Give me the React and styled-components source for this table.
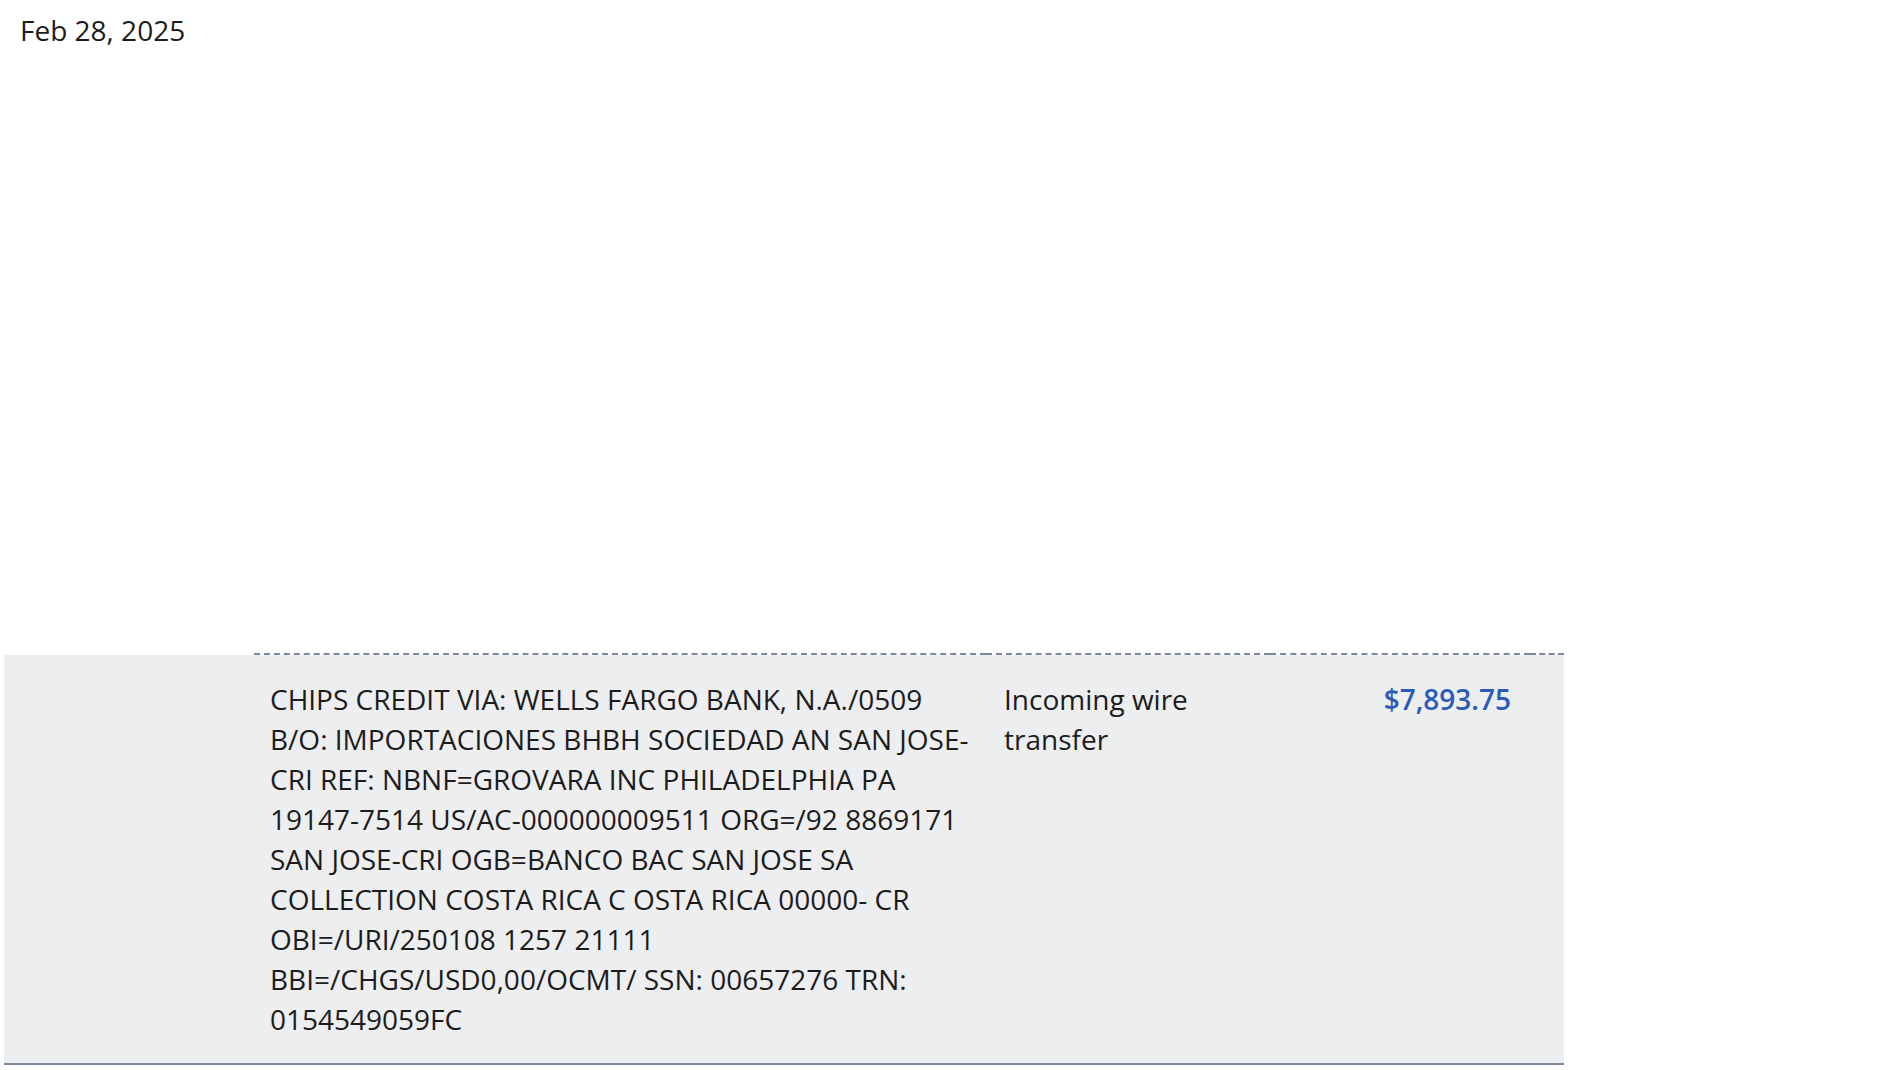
import React from 'react'
import styled, { createGlobalStyle } from 'styled-components'

const GlobalStyle = createGlobalStyle`
  body {
    margin: 0;
    background: #fff;
    font-family: "Open Sans", "Liberation Sans", sans-serif;
    color: #1c1c1c;
  }
`

const Page = styled.div`
  padding: 10px 0 0 4px;
  width: 1560px;
`

const DateLabel = styled.div`
  padding-left: 16px;
  font-size: 28px;
  line-height: 40px;
`

const List = styled.div`
  margin-top: 603px;
`

const Row = styled.div`
  display: grid;
  grid-template-columns: 250px 732px 284px 260px 34px;
`

const Cell = styled.div`
  background: #edeef0;
  background-clip: padding-box;
  border-top: 2px ${({ lead }) => (lead ? 'solid transparent' : 'dashed #7b8899')};
  border-bottom: 2px solid #7b8899;
  padding: 24px ${({ padRight }) => padRight ?? 16}px 24px ${({ padLeft }) => padLeft ?? 16}px;
  font-size: 28px;
  line-height: 40px;
  text-align: ${({ align }) => align || 'left'};
`

const Amount = styled.span`
  color: #2b5cb7;
  font-weight: 600;
`

const transaction = {
  date: 'Feb 28, 2025',
  description:
    'CHIPS CREDIT VIA: WELLS FARGO BANK, N.A./0509 B/O: IMPORTACIONES BHBH SOCIEDAD AN SAN JOSE-CRI REF: NBNF=GROVARA INC PHILADELPHIA PA 19147-7514 US/AC-000000009511 ORG=/92 8869171 SAN JOSE-CRI OGB=BANCO BAC SAN JOSE SA COLLECTION COSTA RICA C OSTA RICA 00000- CR OBI=/URI/250108 1257 21111 BBI=/CHGS/USD0,00/OCMT/ SSN: 00657276 TRN: 0154549059FC',
  type: 'Incoming wire transfer',
  amount: '$7,893.75',
}

export default function App() {
  return (
    <Page>
      <GlobalStyle />
      <DateLabel>{transaction.date}</DateLabel>
      <List>
        <Row>
          <Cell lead />
          <Cell>{transaction.description}</Cell>
          <Cell padLeft={18}>{transaction.type}</Cell>
          <Cell align="right" padRight={19}>
            <Amount>{transaction.amount}</Amount>
          </Cell>
          <Cell padLeft={0} padRight={0} />
        </Row>
      </List>
    </Page>
  )
}
